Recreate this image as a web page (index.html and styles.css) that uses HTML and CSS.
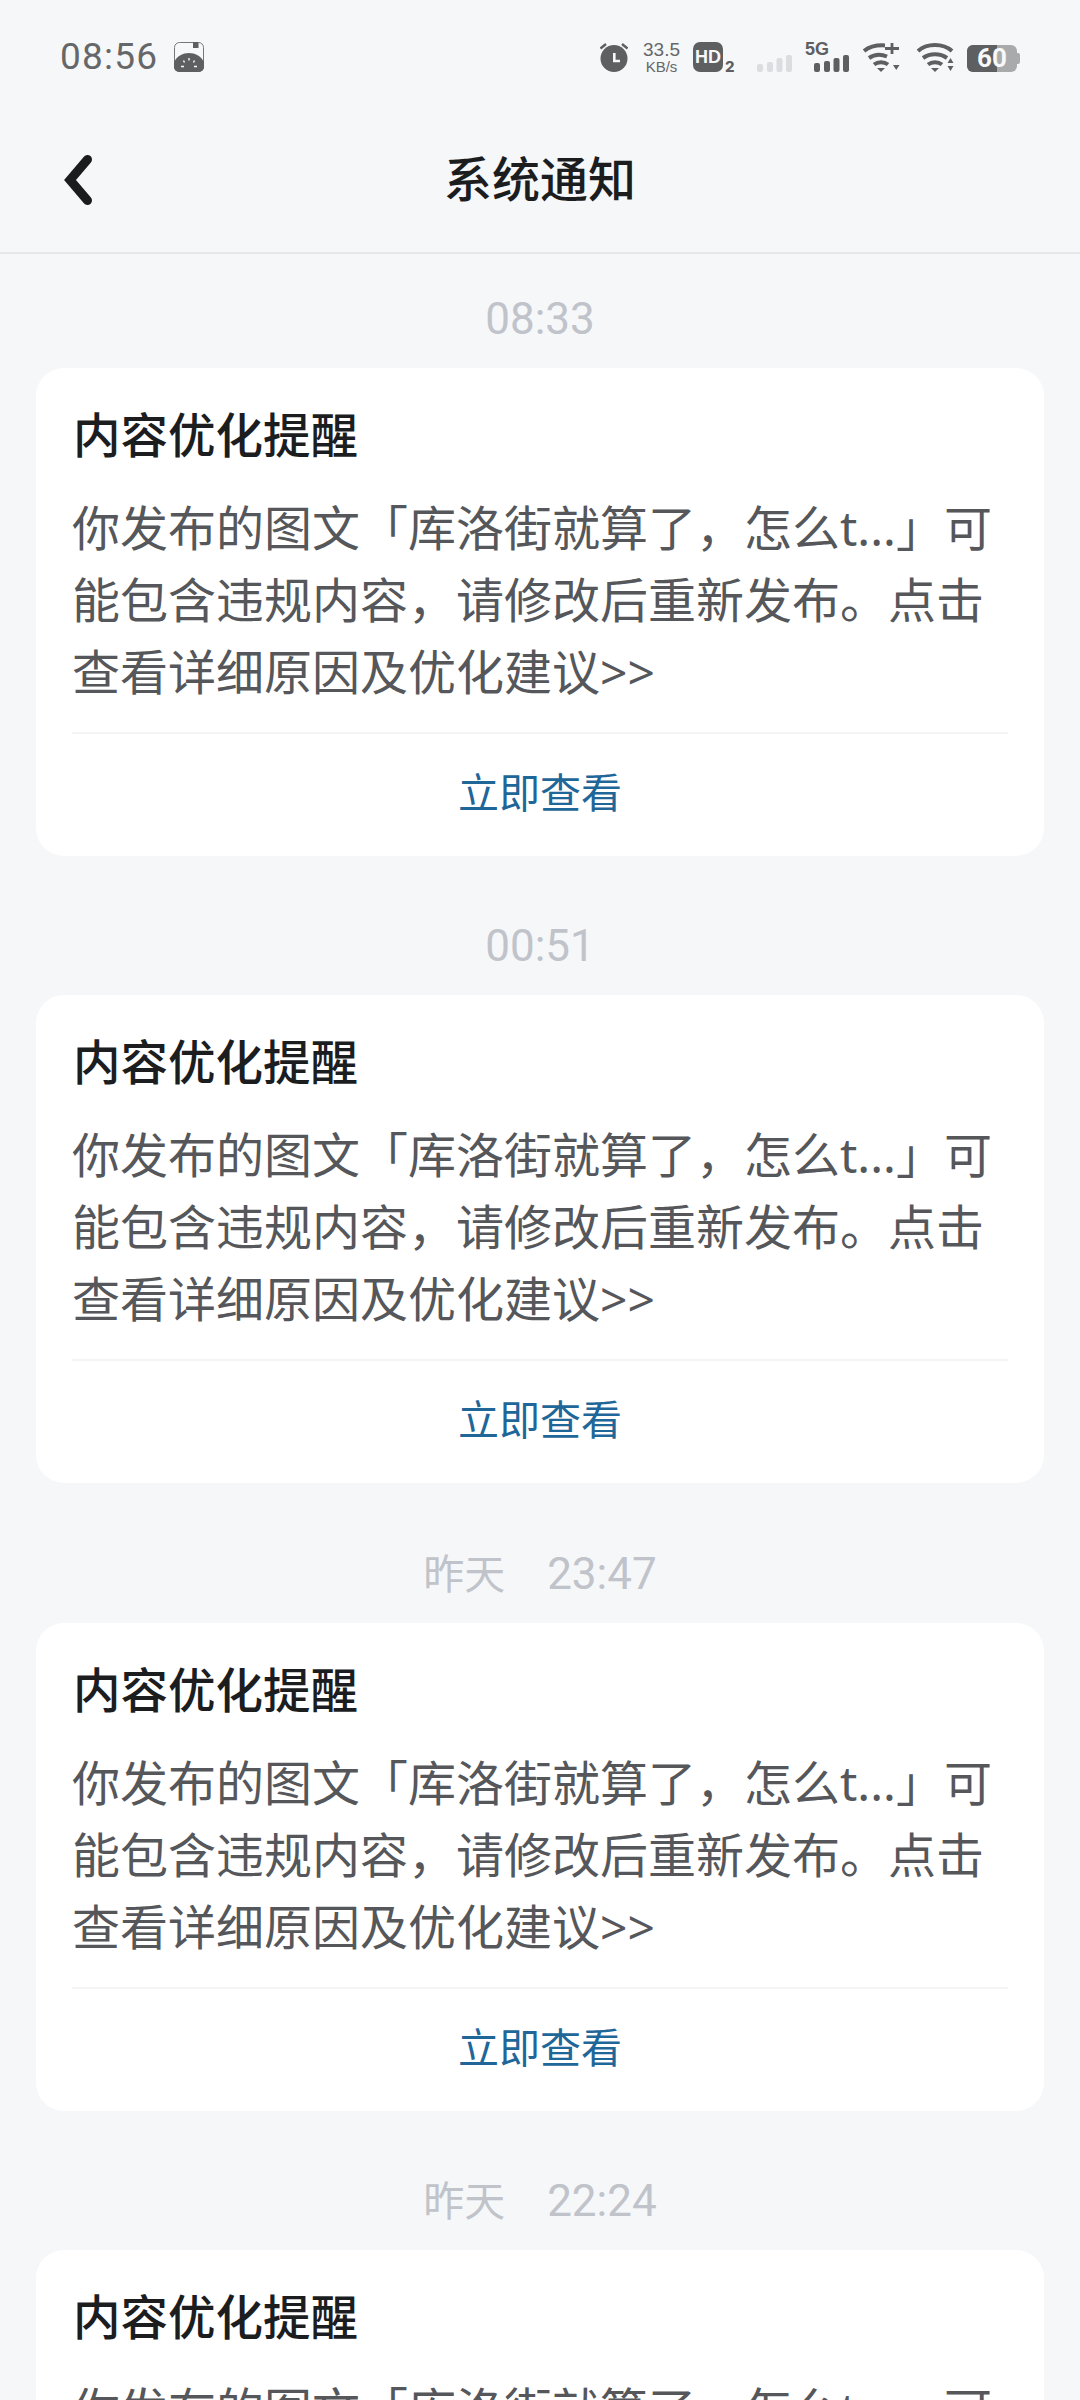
FILE: index.html
```html
<!DOCTYPE html>
<html lang="zh-CN">
<head>
<meta charset="utf-8">
<title>系统通知</title>
<link rel="stylesheet" href="styles.css">
</head>
<body>
<div class="top">
  <div class="status">
    <div class="status-left">
      <span class="clock">08:56</span>
      <svg class="ic-app" viewBox="0 0 30 30"><rect x="0.5" y="0.5" width="29" height="29" rx="5" fill="#f7f8fa" stroke="#777"/><path d="M0 25V20C3 14 9 11 15 11s12 3 15 9v5a5 5 0 0 1-5 5H5a5 5 0 0 1-5-5z" fill="#5e5f61"/><rect x="19" y="0" width="5.500" height="6" fill="#5e5f61"/><path d="M15 16v2.500M9.500 18.500l1 2M20.500 18.500l-1 2M7 24.500h3M20 24.500h3" stroke="#f7f8fa" stroke-width="1.400"/></svg>
    </div>
    <div class="status-right">
      <svg class="ic-alarm" viewBox="0 0 28 29"><circle cx="14" cy="15.500" r="13.500" fill="#5e5f61"/><path d="M14.300 10v8H20" fill="none" stroke="#f7f8fa" stroke-width="2.600"/><path d="M0.500 5.500L6 1M27.500 5.500L22 1" stroke="#5e5f61" stroke-width="2.400"/></svg>
      <div class="speed"><span>33.5</span><span class="unit">KB/s</span></div>
      <div class="hd"><span class="hd-box">HD</span><span class="hd-num">2</span></div>
      <svg class="ic-sig1" viewBox="0 0 35 17"><g fill="#dcdde0"><rect x="0" y="9" width="6" height="8" rx="2"/><rect x="10" y="7" width="6" height="10" rx="2"/><rect x="19.500" y="3" width="6" height="14" rx="2"/><rect x="29" y="0" width="6" height="17" rx="2"/></g></svg>
      <div class="fiveg"><span class="fiveg-label">5G</span><svg class="ic-sig2" viewBox="0 0 35 17"><g fill="#5e5f61"><rect x="0" y="8" width="6" height="9" rx="2"/><rect x="10" y="6" width="6" height="11" rx="2"/><rect x="19.500" y="3" width="6" height="14" rx="2"/><rect x="29" y="0" width="6" height="17" rx="2"/></g></svg></div>
      <svg class="ic-wifi1" viewBox="0 0 37 29"><g fill="none" stroke="#5e5f61" stroke-width="4"><path d="M1 8C7 3 14 2 22 2.400"/><path d="M6 15C11 11.500 18 11 24 13.500"/><path d="M11 21.500c4-3 10-3 14 0"/></g><path d="M14 25h8l-4 4zM30 22h6.500l-3.250 5z" fill="#5e5f61"/><path d="M22 5.500h14M29 0v11" stroke="#5e5f61" stroke-width="2.800"/></svg>
      <svg class="ic-wifi2" viewBox="0 0 37 29"><g fill="none" stroke="#5e5f61" stroke-width="4"><path d="M1 8C10 0 26 0 35 8"/><path d="M6 15c7-5 17-5 24 0"/><path d="M11 21.500c4-3 10-3 14 0"/></g><path d="M14 25h8l-4 4zM30.500 20l3-5 3 5zM30.500 23h6l-3 5z" fill="#5e5f61"/></svg>
      <div class="battery"><span class="batt-body"><span class="batt-fill" style="width:60%"></span><span class="batt-num">60</span></span><span class="batt-tip"></span></div>
    </div>
  </div>
  <div class="nav">
    <svg class="back" viewBox="0 0 36 60"><path d="M27.500 9.500L10 30l17.500 20.500" fill="none" stroke="#1b1c1e" stroke-width="9" stroke-linecap="round" stroke-linejoin="miter"/></svg>
    <h1 class="title">系统通知</h1>
  </div>
</div>
<main class="list">
  <section class="item">
    <div class="time">08:33</div>
    <article class="card">
      <h2 class="card-title">内容优化提醒</h2>
      <p class="card-text">你发布的图文「库洛街就算了，怎么t...」可能包含违规内容，请修改后重新发布。点击查看详细原因及优化建议&gt;&gt;</p>
      <div class="card-link">立即查看</div>
    </article>
  </section>
  <section class="item">
    <div class="time">00:51</div>
    <article class="card">
      <h2 class="card-title">内容优化提醒</h2>
      <p class="card-text">你发布的图文「库洛街就算了，怎么t...」可能包含违规内容，请修改后重新发布。点击查看详细原因及优化建议&gt;&gt;</p>
      <div class="card-link">立即查看</div>
    </article>
  </section>
  <section class="item">
    <div class="time"><span class="time-day">昨天&emsp;</span>23:47</div>
    <article class="card">
      <h2 class="card-title">内容优化提醒</h2>
      <p class="card-text">你发布的图文「库洛街就算了，怎么t...」可能包含违规内容，请修改后重新发布。点击查看详细原因及优化建议&gt;&gt;</p>
      <div class="card-link">立即查看</div>
    </article>
  </section>
  <section class="item">
    <div class="time"><span class="time-day">昨天&emsp;</span>22:24</div>
    <article class="card">
      <h2 class="card-title">内容优化提醒</h2>
      <p class="card-text">你发布的图文「库洛街就算了，怎么t...」可能包含违规内容，请修改后重新发布。点击查看详细原因及优化建议&gt;&gt;</p>
      <div class="card-link">立即查看</div>
    </article>
  </section>
</main>
</body>
</html>
```
FILE: styles.css
```css
* { box-sizing: border-box; }
html, body { margin: 0; padding: 0; }
body {
  width: 1080px;
  height: 2400px;
  overflow: hidden;
  background: #f6f7f9;
  font-family: "Roboto", "Noto Sans CJK SC", sans-serif;
}
.top { height: 254px; border-bottom: 2px solid #e6e7ea; }
.status {
  height: 116px;
  padding: 42px 60px 0 60px;
  display: flex;
  justify-content: space-between;
  align-items: flex-start;
}
.status-left { display: flex; align-items: center; gap: 16px; height: 30px; }
.clock { font-size: 37px; line-height: 30px; color: #666769; letter-spacing: 1.2px; }
.ic-app { width: 30px; height: 30px; }
.status-right { display: flex; align-items: flex-end; height: 30px; }
.ic-alarm { width: 28px; height: 29px; margin-right: 15px; }
.speed { display: flex; flex-direction: column; align-items: center; align-self: flex-start; width: 37px; height: 30px; margin-right: 13px; color: #666769; font-family: "Liberation Sans", sans-serif; font-size: 19px; line-height: 15px; }
.speed .unit { font-size: 15px; line-height: 20px; }
.hd { display: flex; align-items: flex-end; width: 43px; margin-right: 21px; }
.hd-box { width: 30px; height: 30px; border-radius: 7px; background: #5e5f61; color: #f7f8fa; font: 700 18px/30px "Liberation Sans", sans-serif; text-align: center; }
.hd-num { font: 800 15px/11px "Inter", sans-serif; color: #5e5f61; margin-left: 2px; }
.ic-sig1 { width: 35px; height: 17px; margin-right: 13px; }
.fiveg { display: flex; flex-direction: column; align-items: flex-start; width: 44px; height: 30px; margin-right: 14px; }
.fiveg-label { font: 700 18px/14px "Liberation Sans", sans-serif; color: #5e5f61; }
.ic-sig2 { width: 35px; height: 17px; margin-left: 9px; margin-top: -1px; }
.ic-wifi1 { width: 37px; height: 29px; margin-right: 17px; }
.ic-wifi2 { width: 37px; height: 29px; margin-right: 13px; }
.battery { display: flex; align-items: center; height: 27px; }
.batt-body { position: relative; display: block; width: 50px; height: 27px; border-radius: 6px; background: #a9aaac; }
.batt-fill { display: block; height: 100%; background: #5e5f61; border-radius: 6px 0 0 6px; }
.batt-num { position: absolute; inset: 0; text-align: center; color: #f7f8fa; font: 700 26px/27px "Roboto", sans-serif; }
.batt-tip { width: 3px; height: 11px; background: #a9aaac; border-radius: 0 2px 2px 0; }
.nav { height: 136px; padding-bottom: 6px; display: flex; align-items: center; justify-content: center; position: relative; }
.back { position: absolute; left: 60px; top: 34px; width: 36px; height: 60px; }
.title { margin: 0; font-size: 48px; font-weight: 500; line-height: 60px; color: #1c1d1f; }
.list { margin-top: -0.5px; padding: 0 36px; }
.item { height: 627.5px; display: flex; flex-direction: column; }
.time { height: 114px; padding-top: 40px; text-align: center; font-size: 44px; line-height: 50px; color: #c0c3c9; }
.time-day { font-size: 41px; }
.card { height: 488px; background: #fff; border-radius: 28px; padding: 0 36px; }
.card-title { margin: 0; padding: 39px 0 0 1px; font-size: 47.5px; font-weight: 500; line-height: 60px; color: #1c1d1f; }
.card-text { margin: 25px 0 0; height: 216px; font-family: "Noto Sans", "Noto Sans CJK SC", sans-serif; font-size: 48px; line-height: 72px; color: #55575b; }
.card-link { margin-top: 24px; border-top: 2px solid #f3f4f6; padding-top: 32px; text-align: center; font-size: 41px; line-height: 56px; color: #1f6699; }
```
